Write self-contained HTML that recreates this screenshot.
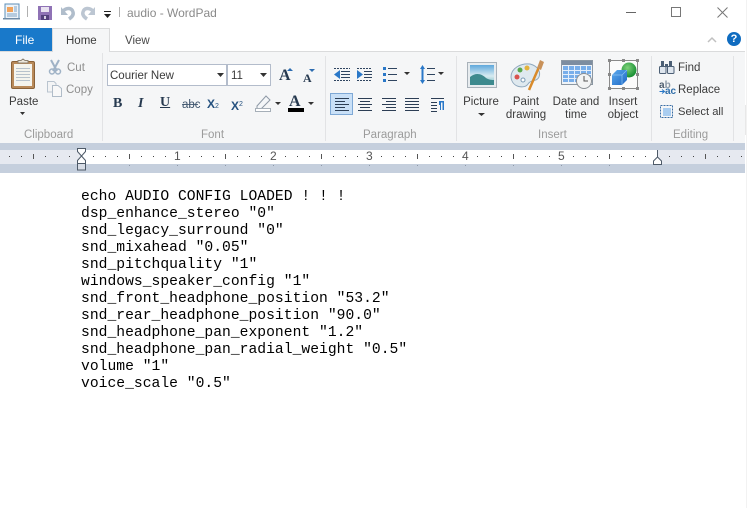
<!DOCTYPE html>
<html><head><meta charset="utf-8"><title>audio - WordPad</title>
<style>
html,body{margin:0;padding:0;background:#fff}
#p{position:relative;width:747px;height:508px;overflow:hidden;background:#fff;font-family:"Liberation Sans",sans-serif;font-size:11.5px;color:#3b3b3b}
#p svg{position:absolute;left:0;top:0}
.t{position:absolute;white-space:nowrap;line-height:14px}
.c{text-align:center;transform:translateX(-50%)}
.g{color:#8f8f8f}
.gl{color:#9b9b9b}
pre{position:absolute;left:81px;top:189px;margin:0;font:14.67px/17px "Liberation Mono",monospace;letter-spacing:.02px;color:#000}
</style></head><body><div id="p">
<svg width="747" height="508" viewBox="0 0 747 508">
<!-- ribbon -->
<rect x="0" y="52" width="745" height="91" fill="#f5f6f7"/>
<rect x="0" y="51" width="745" height="1" fill="#dadbdc"/>
<rect x="0" y="28" width="52" height="23" fill="#1979ca"/>
<path d="M52.500 52V28.500H109.500V52" fill="#f5f6f7" stroke="#dadbdc"/>
<rect x="53" y="50" width="56" height="3" fill="#f5f6f7"/>
<path d="M102.500 53V141M325.500 56V141M456.500 56V141M651.500 56V141M733.500 56V141" stroke="#e2e3e5"/>
<!-- ruler -->
<rect x="0" y="143" width="745" height="30" fill="#c5cfdd"/>
<rect x="0" y="150" width="745" height="14" fill="#e6e9f0"/>
<rect x="81" y="150" width="576" height="14" fill="#fff"/>
<path d="M9 156.500H745" stroke="#444" stroke-dasharray="1 11"/>
<path d="M33.500 154V159M129.500 154V159M225.500 154V159M321.500 154V159M417.500 154V159M513.500 154V159M609.500 154V159M705.500 154V159" stroke="#555"/>
<rect x="172" y="151" width="10" height="12" fill="#fff"/><rect x="268" y="151" width="10" height="12" fill="#fff"/><rect x="364" y="151" width="10" height="12" fill="#fff"/><rect x="460" y="151" width="10" height="12" fill="#fff"/><rect x="556" y="151" width="10" height="12" fill="#fff"/>
<path d="M129 165.500h1M177 165.500h1M225 165.500h1M273 165.500h1M321 165.500h1M369 165.500h1M417 165.500h1M465 165.500h1M513 165.500h1M561 165.500h1M609 165.500h1" stroke="#8f99a8"/>
<path d="M77.500 148.500H85.500V151.500L81.500 156L77.500 151.500Z" fill="#fff" stroke="#4e5a68"/>
<path d="M81.500 156L85.500 160.500V163.500H77.500V160.500Z" fill="#fff" stroke="#4e5a68"/>
<rect x="77.500" y="163.500" width="8" height="6.500" fill="#d8dde6" stroke="#4e5a68"/>
<path d="M657.500 150V157L661.500 161V164.500H653.500V161L657.500 157" fill="#fff" stroke="#4e5a68"/>
<rect x="745" y="0" width="2" height="508" fill="#fff"/>
<rect x="745" y="105" width="2" height="30" fill="#e8e8e8"/>
<rect x="746" y="0" width="1" height="508" fill="#f2f2f2"/>

<!-- QAT: doc icon -->
<rect x="5" y="4" width="14" height="15" fill="#eef3f8" stroke="#5c8fb8"/>
<rect x="7" y="7" width="6" height="5" fill="#f1a35a"/>
<path d="M14 7h3M14 9h3M14 11h3M7 14h10M7 16h10" stroke="#7fa3c4"/>
<rect x="3" y="18" width="17" height="1.500" fill="#6f8ba6"/>
<path d="M27.500 6V17" stroke="#b0b0b0"/>
<!-- save -->
<path d="M38 6H52V20H38Z" fill="#8f72b5"/>
<rect x="41" y="7" width="8" height="5" fill="#e8e1f0"/>
<rect x="41" y="15" width="8" height="5" fill="#54407c"/>
<rect x="44" y="16" width="2" height="3" fill="#d8cfe5"/>
<!-- undo / redo -->
<path d="M63 11C67 7 72 8 73 12C74 15 72 17 69 19" fill="none" stroke="#b0bdcb" stroke-width="3.500"/>
<path d="M61 7V15H68Z" fill="#b0bdcb"/>
<path d="M93 11C89 7 84 8 83 12C82 15 84 17 87 19" fill="none" stroke="#bcc6d2" stroke-width="3.500"/>
<path d="M95 7V15H88Z" fill="#bcc6d2"/>
<path d="M104 11.500H111" stroke="#222"/><path d="M104 14H111L107.500 18Z" fill="#222"/>
<path d="M119.500 7V17" stroke="#b0b0b0"/>
<!-- window controls -->
<path d="M626 12.500H636" stroke="#666"/>
<rect x="671.500" y="7.500" width="9" height="9" fill="none" stroke="#777"/>
<path d="M717.500 7.500L727.500 17.500M727.500 7.500L717.500 17.500" stroke="#777"/>
<path d="M708 42L712 38L716 42" fill="none" stroke="#c0c0c0" stroke-width="1.500"/>
<circle cx="734" cy="39" r="7" fill="#0f6cc0"/>

<!-- paste -->
<rect x="11.500" y="61.500" width="23" height="27" rx="1.500" fill="#b98a5a" stroke="#8a6238"/>
<rect x="14" y="64" width="18" height="22" fill="#f4f4ee"/>
<path d="M16 68.500H30M16 71.500H30M16 74.500H30M16 77.500H30M16 80.500H30" stroke="#b7c2cc"/>
<path d="M18 63V60.500H21L23 59L25 60.500H28V63Z" fill="#ece7dc" stroke="#8d8271"/>
<path d="M20 112H25L22.500 115Z" fill="#333"/>
<!-- cut/copy -->
<path d="M51 60L57 71M59 60L53 71" stroke="#9fb2c6" stroke-width="2"/>
<circle cx="52" cy="71.500" r="2.500" fill="none" stroke="#9fb2c6" stroke-width="1.500"/>
<circle cx="58" cy="71.500" r="2.500" fill="none" stroke="#9fb2c6" stroke-width="1.500"/>
<path d="M47.500 81.500H54L56 83.500V92H47.500Z" fill="#f3f4f5" stroke="#b9c4cf"/>
<path d="M52.500 85.500H58L61.500 88.500V96.500H52.500Z" fill="#f8f8f8" stroke="#b0bcc8"/>
<!-- font boxes -->
<rect x="107.500" y="64.500" width="119" height="21" fill="#fff" stroke="#b3bccb"/>
<path d="M217 73H224L220.500 77Z" fill="#333"/>
<rect x="227.500" y="64.500" width="43" height="21" fill="#fff" stroke="#b3bccb"/>
<path d="M260 73H267L263.500 77Z" fill="#333"/>
<path d="M182 104.500L198 104.500" stroke="#566a80"/>
<!-- highlighter -->
<path d="M257 106L266 96L270 100L261 109H257Z" fill="#f4f6f8" stroke="#8e99a6"/>
<rect x="255.500" y="108.500" width="15" height="3" fill="#fff" stroke="#a6afb8"/>
<path d="M275 102H281L278 105Z" fill="#333"/>
<rect x="288" y="108" width="16" height="4" fill="#000"/>
<path d="M308 102H314L311 105Z" fill="#333"/>
<!-- grow shrink carets -->
<path d="M287 71H293L290 68Z" fill="#2d6cb0"/>
<path d="M309 69H315L312 72Z" fill="#2d6cb0"/>
<!-- paragraph row 1 -->
<path d="M334 68.500H350M334 80.500H350" stroke="#2f4560" stroke-dasharray="2 1"/>
<path d="M341 71.500H350M341 74.500H350M341 77.500H350" stroke="#2f4560" stroke-width="1"/>
<path d="M334 74.500L340 70V79Z" fill="#2a78c8"/>
<path d="M357 68.500H372M357 80.500H372" stroke="#2f4560" stroke-dasharray="2 1"/>
<path d="M364 71.500H372M364 74.500H372M364 77.500H372" stroke="#2f4560"/>
<path d="M363 74.500L357 70V79Z" fill="#2a78c8"/>
<path d="M388 68.500H397M388 74.500H397M388 80.500H397" stroke="#2f4560"/>
<rect x="383" y="67" width="3" height="3" fill="#2a78c8"/><rect x="383" y="73" width="3" height="3" fill="#2a78c8"/><rect x="383" y="79" width="3" height="3" fill="#2a78c8"/>
<path d="M404 72H410L407 75Z" fill="#333"/>
<path d="M427 68.500H435M427 74.500H435M427 80.500H435" stroke="#2f4560"/>
<path d="M422.500 67V82" stroke="#2a78c8" stroke-width="2"/><path d="M420 69L422.500 65L425 69ZM420 80L422.500 84L425 80Z" fill="#2a78c8"/>
<path d="M438 72H444L441 75Z" fill="#333"/>
<!-- paragraph row 2 -->
<rect x="330.500" y="93.500" width="22" height="21" fill="#c9e0f7" stroke="#7fa9d6"/>
<path d="M335 98.500H349M335 101.500H345M335 104.500H349M335 107.500H345M335 110.500H349" stroke="#2c3e55"/>
<path d="M358 98.500H372M360 101.500H370M358 104.500H372M360 107.500H370M358 110.500H372" stroke="#2c3e55"/>
<path d="M382 98.500H396M386 101.500H396M382 104.500H396M386 107.500H396M382 110.500H396" stroke="#2c3e55"/>
<path d="M405 98.500H419M405 101.500H419M405 104.500H419M405 107.500H419M405 110.500H419" stroke="#2c3e55"/>
<path d="M431 98.500H444M431 102.500H437M431 105.500H437M431 108.500H437M431 111.500H437" stroke="#2c3e55"/>
<path d="M439 101H444V110H442.500V102.500H441V110H440V105H439Z" fill="#2a78c8"/>
<!-- picture -->
<rect x="467.500" y="62.500" width="29" height="25" fill="#e7ecef" stroke="#a9b2ba"/>
<defs>
<linearGradient id="sky" x1="0" y1="0" x2="0" y2="1"><stop offset="0" stop-color="#5fa8dc"/><stop offset=".55" stop-color="#d7ebf1"/><stop offset="1" stop-color="#6fb3bd"/></linearGradient>
<linearGradient id="cube" x1="0" y1="0" x2="1" y2="1"><stop offset="0" stop-color="#5aa9ee"/><stop offset="1" stop-color="#1f68c4"/></linearGradient>
<radialGradient id="ball" cx=".4" cy=".35" r=".7"><stop offset="0" stop-color="#7fd27a"/><stop offset="1" stop-color="#0f8a2e"/></radialGradient>
</defs>
<rect x="470" y="65" width="24" height="20" fill="url(#sky)"/>
<path d="M470 77C476 72 482 74 486 78C489 80 492 80 494 80V85H470Z" fill="#3d8a8e"/>
<!-- paint -->
<path d="M511 77C511 68 521 63 530 64C538 66 541 72 539 77C537 82 531 79 528 84C525 89 512 88 511 77Z" fill="#dfe9ef" stroke="#8fa8bd"/>
<circle cx="517" cy="77" r="2.500" fill="#d9534f"/><circle cx="520" cy="70" r="2.500" fill="#5aa84c"/><circle cx="527" cy="68" r="2.500" fill="#e3b23c"/><circle cx="523" cy="80" r="2" fill="#fff" stroke="#7a9ab5"/>
<path d="M529 90L539 67" stroke="#d98b2b" stroke-width="2.500"/>
<path d="M537 68L540 60L544 62L541 70Z" fill="#c9925a"/>
<!-- date -->
<rect x="561.500" y="60.500" width="31" height="24" fill="#eef3f8" stroke="#8b97a3"/>
<rect x="562" y="61" width="30" height="4" fill="#7d8da0"/>
<rect x="563" y="66" width="28" height="16" fill="#78aeea"/>
<path d="M563 70.500H591M563 74.500H591M563 78.500H591M568.500 66V82M574.500 66V82M580.500 66V82M586.500 66V82" stroke="#e4eefa"/>
<circle cx="584" cy="81" r="7.500" fill="#f3f4f4" stroke="#8a8f94"/>
<path d="M584 76V81H588" fill="none" stroke="#555"/>
<!-- object -->
<rect x="609.500" y="60.500" width="28" height="28" fill="#fbfbfb" stroke="#8a8a8a"/>
<path d="M608 59h3v3h-3zM622 59h3v3h-3zM636 59h3v3h-3zM608 73h3v3h-3zM636 73h3v3h-3zM608 87h3v3h-3zM622 87h3v3h-3zM636 87h3v3h-3z" fill="#888"/>
<circle cx="629" cy="70" r="7.500" fill="url(#ball)"/>
<path d="M612 75L617 70H627V80L622 85H612Z" fill="url(#cube)"/>
<path d="M612 75H622V85M622 75L627 70" fill="none" stroke="#8cc4f3" stroke-width=".7"/>
<!-- find -->
<rect x="659.500" y="66.500" width="6.500" height="7" rx="1" fill="#dfe6ee" stroke="#4c5f75"/><rect x="667.500" y="66.500" width="6.500" height="7" rx="1" fill="#dfe6ee" stroke="#4c5f75"/>
<rect x="661" y="61" width="3" height="6" fill="#4c5f75"/><rect x="669" y="61" width="3" height="6" fill="#4c5f75"/>
<rect x="665" y="64" width="3" height="3" fill="#4c5f75"/>
<path d="M659.500 91.500H664M662 89.500L664.500 91.500L662 93.500" fill="none" stroke="#2a78c8"/>
<!-- select all -->
<rect x="660.500" y="105.500" width="12" height="12" fill="none" stroke="#3a6ea5" stroke-dasharray="2 1"/>
<rect x="663" y="108" width="8" height="8" fill="#a9cdf0"/>
</svg>

<div class="t" style="left:127px;top:6px;color:#8a8a8a;font-size:12px">audio - WordPad</div>
<div class="t" style="left:15px;top:33px;color:#fff;font-size:12px">File</div>
<div class="t" style="left:66px;top:34px;color:#3b3b3b">Home</div>
<div class="t" style="left:125px;top:34px;color:#4a4a4a">View</div>
<div class="t" style="left:729px;top:32px;color:#fff;font-weight:700;font-size:11px;width:10px;text-align:center">?</div>

<div class="t" style="left:9px;top:95px">Paste</div>
<div class="t g" style="left:67px;top:61px">Cut</div>
<div class="t g" style="left:66px;top:83px">Copy</div>
<div class="t gl" style="left:24px;top:128px">Clipboard</div>
<div class="t" style="left:110px;top:69px">Courier New</div>
<div class="t" style="left:231px;top:69px">11</div>
<div class="t" style="left:113px;top:97px;font:700 14px/14px 'Liberation Serif',serif;color:#26394f">B</div>
<div class="t" style="left:138px;top:97px;font:italic 700 14px/14px 'Liberation Serif',serif;color:#26394f">I</div>
<div class="t" style="left:160px;top:96px;font:700 14px/14px 'Liberation Serif',serif;color:#26394f;text-decoration:underline">U</div>
<div class="t" style="left:182px;top:98px;font:11.500px/14px 'Liberation Sans',sans-serif;color:#40566e">abc</div>
<div class="t" style="left:207px;top:97px;font:700 12px/14px 'Liberation Sans',sans-serif;color:#25517f">X<span style="font-size:7px;font-weight:400">2</span></div>
<div class="t" style="left:231px;top:98px;font:700 12px/14px 'Liberation Sans',sans-serif;color:#25517f">X<span style="font-size:7px;font-weight:400;vertical-align:4px">2</span></div>
<div class="t" style="left:279px;top:69px;font:700 16px/14px 'Liberation Serif',serif;color:#26394f">A</div>
<div class="t" style="left:303px;top:71px;font:700 12px/14px 'Liberation Serif',serif;color:#26394f">A</div>
<div class="t" style="left:289px;top:95px;font:700 16px/14px 'Liberation Serif',serif;color:#26394f">A</div>
<div class="t gl" style="left:201px;top:128px">Font</div>
<div class="t gl" style="left:363px;top:128px">Paragraph</div>

<div class="t c" style="left:481px;top:95px">Picture</div>
<svg width="747" height="120" viewBox="0 0 747 120"><path d="M478 113H485L481.500 116Z" fill="#333"/></svg>
<div class="t c" style="left:526px;top:95px">Paint</div>
<div class="t c" style="left:526px;top:108px">drawing</div>
<div class="t c" style="left:576px;top:95px">Date and</div>
<div class="t c" style="left:576px;top:108px">time</div>
<div class="t c" style="left:623px;top:95px">Insert</div>
<div class="t c" style="left:623px;top:108px">object</div>
<div class="t gl" style="left:538px;top:128px">Insert</div>
<div class="t" style="left:678px;top:61px">Find</div>
<div class="t" style="left:678px;top:83px">Replace</div>
<div class="t" style="left:678px;top:105px;font-size:11.200px">Select all</div>
<div class="t" style="left:659px;top:81px;font:700 10px/10px 'Liberation Sans',sans-serif;color:#4a5a6c">a<span style="color:#8a97a5">b</span></div>
<div class="t" style="left:665px;top:87px;font:700 10px/10px 'Liberation Sans',sans-serif;color:#2e6da8">ac</div>
<div class="t gl" style="left:673px;top:128px">Editing</div>

<div class="t" style="left:174px;top:149px;color:#555;font-size:12px">1</div>
<div class="t" style="left:270px;top:149px;color:#555;font-size:12px">2</div>
<div class="t" style="left:366px;top:149px;color:#555;font-size:12px">3</div>
<div class="t" style="left:462px;top:149px;color:#555;font-size:12px">4</div>
<div class="t" style="left:558px;top:149px;color:#555;font-size:12px">5</div>

<pre>echo AUDIO CONFIG LOADED ! ! !
dsp_enhance_stereo "0"
snd_legacy_surround "0"
snd_mixahead "0.05"
snd_pitchquality "1"
windows_speaker_config "1"
snd_front_headphone_position "53.2"
snd_rear_headphone_position "90.0"
snd_headphone_pan_exponent "1.2"
snd_headphone_pan_radial_weight "0.5"
volume "1"
voice_scale "0.5"</pre>
</div></body></html>
